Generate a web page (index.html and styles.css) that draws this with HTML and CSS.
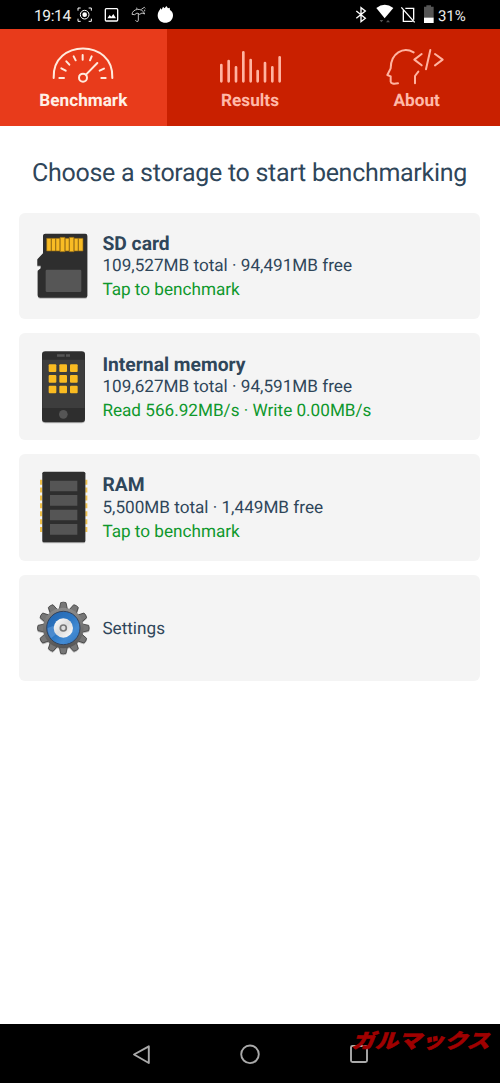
FILE: index.html
```html
<!DOCTYPE html>
<html lang="en">
<head>
<meta charset="utf-8">
<title>Storage benchmark</title>
<link rel="stylesheet" href="styles.css">
</head>
<body>
<div class="screen">
  <header class="status">
    <span class="time">19:14</span>
    <svg class="status-left" viewBox="228 0 300 87" fill="none" stroke="#fff" stroke-width="3">
      <path d="M234 32V24H242M266 24H274V32M274 56V64H266M242 64H234V56"/>
      <circle cx="254" cy="44" r="13"/><circle cx="254" cy="44" r="7" fill="#fff" stroke="none"/>
      <rect x="316" y="26" width="37" height="37" rx="3" stroke-width="4"/>
      <path d="M322 55L329 45L334 50L340 42L348 55Z" fill="#fff" stroke="none"/>
      <path d="M396 43C397 26 427 21 434 42L426 39L419 43L411 39L404 44ZM415 40V61Q415 66 410 64L406 61M411 27L410 23M424 28L433 22L436 25M434 29V34" stroke="#ddd" stroke-width="2.6"/>
      <path d="M473 46C473 36 479 31 482 24L485 29L489 20L494 25L499 18L504 25L509 23L510 30C516 34 519 39 519 46C519 76 473 76 473 46Z" fill="#fff" stroke="none"/>
    </svg>
    <svg class="status-right" viewBox="312 0 246 87" fill="none" stroke="#fff" stroke-width="4">
      <path d="M319 33L346 55L333 65V23L346 33L319 55"/>
      <path d="M379 24Q404 5 430 24L404 55Z" fill="#fff" stroke="none"/>
      <path d="M389 60H400L394 67ZM408 67H420L414 60Z" fill="#555" stroke="none"/>
      <path d="M466 25H491V59M460 31V64H488M454 22L494 67"/>
      <path d="M522 20H529V16H543V20H551V54H522Z" fill="#555" stroke="none"/><path d="M522 53H551V69H522Z" fill="#fff" stroke="none"/>
    </svg>
    <span class="charge">31%</span>
  </header>
  <nav class="tabs">
    <a class="tab active">
      <svg class="tab-icon" viewBox="-5 0 330 170" fill="none" stroke="#ffeadd" stroke-width="6" stroke-linecap="round">
        <path d="M72 129C67 11 253 11 248 129"/>
        <circle cx="160" cy="128" r="12"/><path d="M169 119L203 84"/>
        <path d="M89 129H103M95 100L108 107M110 79L119 89M132 64L138 76M159 60V74M186 64L181 76M223 101L210 107M228 129H215"/>
      </svg>
      <span>Benchmark</span>
    </a>
    <a class="tab">
      <svg class="tab-icon" viewBox="-15 0 330 170" fill="none" stroke="#ffb3a0" stroke-width="8" stroke-linecap="round">
        <path d="M64 90V139M86 78V139M108 97V139M130 52V139M152 75V139M173 108V139M195 84V139M217 97V139M239 67V139"/>
      </svg>
      <span>Results</span>
    </a>
    <a class="tab">
      <svg class="tab-icon" viewBox="-25 0 330 170" fill="none" stroke="#ffb3a0" stroke-width="6" stroke-linecap="round" stroke-linejoin="round">
        <path d="M130 52C99 34 61 54 61 100L51 120L61 124V140Q62 149 83 145M144 110L134 123V145M154 57L132 74L154 91M180 45L167 103M194 57L217 74L194 91"/>
      </svg>
      <span>About</span>
    </a>
  </nav>
  <main class="content">
    <h1>Choose a storage to start benchmarking</h1>
    <section class="card">
      <svg class="card-icon" viewBox="12 24 249 318">
        <path class="shadow" d="M91 86H211Q217 86 217 92V272Q217 278 211 278H75Q68 278 68 271V197L77 190V182H67V163L84 145V92Q84 86 91 86Z" fill="#2e2e2e"/>
        <path d="M95 100H109V138H95ZM109 100H122V138H109ZM122 100H135V138H122ZM135 97H150V140H135ZM150 100H163V138H150ZM163 97H177V140H163ZM177 100H190V138H177ZM190 100H204V138H190Z" fill="#f9bc24" stroke="#8b6515" stroke-width="2"/>
        <rect x="92" y="194" width="107" height="67" rx="4" fill="#565656"/>
      </svg>
      <div class="info"><h2>SD card</h2><p>109,527MB total · 94,491MB free</p><p class="result">Tap to benchmark</p></div>
    </section>
    <section class="card">
      <svg class="card-icon" viewBox="12 11 249 318">
        <rect class="shadow" x="81" y="63" width="129" height="213" rx="10" fill="#2e2e2e"/>
        <path d="M82 88H209V233H82Z" fill="#3d3d3d"/>
        <path d="M126 72H149V79H126ZM153 72H165V79H153Z" fill="#555"/>
        <g fill="#fabb21"><rect x="101" y="102" width="23" height="23" rx="3"/><rect x="133" y="102" width="23" height="23" rx="3"/><rect x="165" y="102" width="23" height="23" rx="3"/><rect x="101" y="134" width="23" height="23" rx="3"/><rect x="133" y="134" width="23" height="23" rx="3"/><rect x="165" y="134" width="23" height="23" rx="3"/><rect x="101" y="166" width="23" height="23" rx="3"/><rect x="133" y="166" width="23" height="23" rx="3"/><rect x="165" y="166" width="23" height="23" rx="3"/></g>
        <circle cx="145" cy="252" r="13" fill="#555"/>
      </svg>
      <div class="info"><h2>Internal memory</h2><p>109,627MB total · 94,591MB free</p><p class="result">Read 566.92MB/s · Write 0.00MB/s</p></div>
    </section>
    <section class="card">
      <svg class="card-icon" viewBox="12 13 249 318">
        <path d="M79 90V250M213 90V250" stroke="#efc04a" stroke-width="8" stroke-dasharray="15 8.7"/>
        <rect class="shadow" x="82" y="66" width="129" height="212" rx="5" fill="#2e2e2e"/>
        <path d="M105 93H187V125H105ZM105 136H187V168H105ZM105 180H187V212H105ZM105 223H187V255H105Z" fill="#555"/>
      </svg>
      <div class="info"><h2>RAM</h2><p>5,500MB total · 1,449MB free</p><p class="result">Tap to benchmark</p></div>
    </section>
    <section class="card">
      <svg class="card-icon" viewBox="12 15 249 318">
        <defs>
          <path id="tooth" d="M133 117L137 98Q145 95 153 98L157 117Z"/>
          <linearGradient id="metal" x2="0" y2="1"><stop stop-color="#8d8d8d"/><stop offset="1" stop-color="#555"/></linearGradient>
          <linearGradient id="blue" x2="1" y2="1"><stop stop-color="#2464ad"/><stop offset=".48" stop-color="#2d78c4"/><stop offset=".7" stop-color="#438bd3"/><stop offset="1" stop-color="#2e73bd"/></linearGradient>
          <linearGradient id="hub" x2="1" y2="1"><stop stop-color="#fff"/><stop offset=".5" stop-color="#ddd"/><stop offset="1" stop-color="#fff"/></linearGradient>
        </defs>
        <g class="shadow" fill="#777" stroke="#454545" stroke-width="2.5">
          <use href="#tooth"/><use href="#tooth" transform="rotate(30 145 174)"/><use href="#tooth" transform="rotate(60 145 174)"/><use href="#tooth" transform="rotate(90 145 174)"/><use href="#tooth" transform="rotate(120 145 174)"/><use href="#tooth" transform="rotate(150 145 174)"/><use href="#tooth" transform="rotate(180 145 174)"/><use href="#tooth" transform="rotate(210 145 174)"/><use href="#tooth" transform="rotate(240 145 174)"/><use href="#tooth" transform="rotate(270 145 174)"/><use href="#tooth" transform="rotate(300 145 174)"/><use href="#tooth" transform="rotate(330 145 174)"/>
          <circle cx="145" cy="174" r="61" fill="url(#metal)" stroke="none"/>
        </g>
        <circle cx="145" cy="174" r="50" fill="url(#blue)" stroke="#35435a" stroke-width="3"/>
        <path d="M98 174A47 47 0 0 0 109 204L127 190L122 165Z" fill="#70a7df" opacity=".45"/>
        <circle cx="145" cy="174" r="29" fill="url(#hub)"/>
        <circle cx="145" cy="174" r="9" fill="#ddd" stroke="#777" stroke-width="5"/>
      </svg>
      <div class="info"><p>Settings</p></div>
    </section>
  </main>
  <footer class="navbar">
    <svg class="nav-icon" viewBox="0 0 30 30"><path d="M7 15.5L21.8 7.3V24Z"/></svg>
    <svg class="nav-icon" viewBox="0 0 30 30"><circle cx="15" cy="15.3" r="8.8"/></svg>
    <svg class="nav-icon" viewBox="0 0 30 30"><rect x="7" y="7" width="16" height="16" rx="1.5"/></svg>
    <span class="watermark" lang="ja">ガルマックス</span>
  </footer>
</div>
</body>
</html>
```
FILE: styles.css
```css
* { box-sizing: border-box; }
body { margin: 0; background: #fff; font-family: Roboto, sans-serif; color: #2f465a; text-rendering: geometricPrecision; }
h1, h2, p { margin: 0; }
.screen { width: 500px; height: 1083px; display: flex; flex-direction: column; overflow: hidden; }
.status { height: 29px; flex: none; display: flex; align-items: center; background: #000; color: #eee; font-size: 15.6px; padding: 2px 34px 0 34px; }
.time { width: 42px; letter-spacing: -0.4px; }
.status-left { width: 100px; height: 29px; margin-top: -2px; }
.status-right { width: 82px; height: 29px; margin: -2px 2px 0 auto; }
.charge { width: 28px; font-size: 15px; letter-spacing: -0.1px; }
.tabs { flex: none; height: 97px; display: grid; grid-template-columns: repeat(3, 1fr); background: #c92000; }
.tab { display: flex; flex-direction: column; align-items: center; color: #ffb9a8; font-size: 17.2px; font-weight: 700; line-height: 20px; padding-top: 6px; }
.tab.active { background: #e83b1b; color: #fff0e6; }
.tab-icon { display: block; width: 110px; height: 56.67px; margin-bottom: -0.7px; }
.content { flex: 1; padding: 0 20px 0 19px; display: flex; flex-direction: column; gap: 14.2px; }
h1 { height: 72.5px; padding-top: 31px; line-height: 34px; font-size: 25px; letter-spacing: -0.29px; font-weight: 400; text-align: center; white-space: nowrap; }
.card { height: 106.5px; flex: none; display: flex; align-items: center; background: #f4f4f4; border-radius: 6px; }
.card-icon { width: 83px; height: 106px; flex: none; }
.shadow { filter: drop-shadow(0 3px 2px #bbb); }
.info { font-size: 17.15px; line-height: 23.7px; padding: 3px 0 0 0.4px; white-space: nowrap; }
.info h2 { font-size: 19.3px; font-weight: 700; line-height: 23.5px; }
.result { color: #0f982c; }
.navbar { position: relative; height: 59px; flex: none; display: flex; justify-content: center; gap: 78.5px; padding-top: 15px; background: #000; }
.nav-icon { width: 30px; height: 30px; fill: none; stroke: #aaa; stroke-width: 1.9; stroke-linejoin: round; }
.watermark { position: absolute; left: 354px; top: 1px; font: 900 21px/30px "Noto Sans CJK JP", sans-serif; -webkit-text-stroke: 0.6px #a00000; color: #a00000; white-space: nowrap; transform: skewX(-18deg) scale(1.1, 0.95); transform-origin: 0 50%; }
```
